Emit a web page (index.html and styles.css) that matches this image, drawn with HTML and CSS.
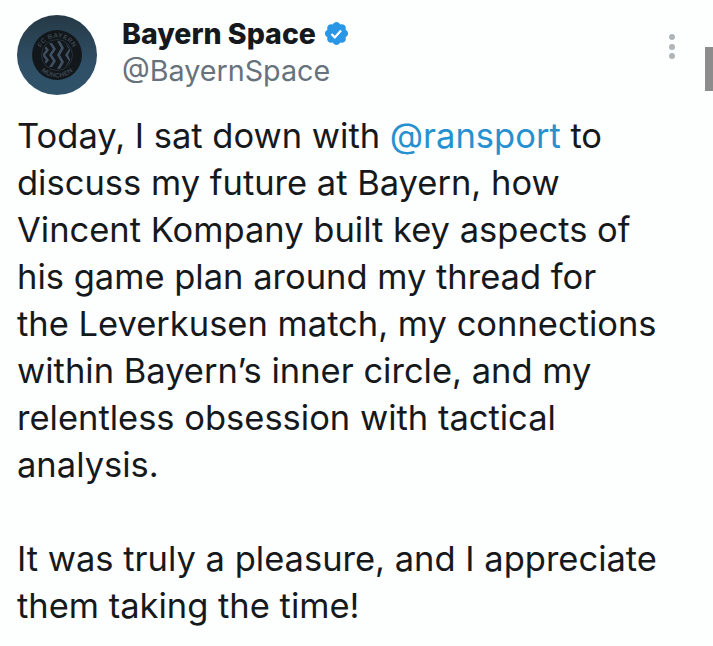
FILE: index.html
```html
<!DOCTYPE html>
<html lang="en">
<head>
<meta charset="utf-8">
<title>Bayern Space</title>
<link rel="stylesheet" href="styles.css">
</head>
<body>
<main class="tweet">
  <header class="head">
    <div class="avatar">
      <svg class="crest" viewBox="0 0 50 50" width="50" height="50" aria-hidden="true">
        <defs>
          <path id="ringTop" d="M7.500 25a17.500 17.500 0 0 1 35 0"/>
          <path id="ringBottom" d="M2.500 25a22.500 22.500 0 0 0 45 0"/>
          <clipPath id="inner"><circle cx="25" cy="25" r="14"/></clipPath>
        </defs>
        <circle cx="25" cy="25" r="25" fill="#12171b"/>
        <circle cx="25" cy="25" r="15.500" fill="none" stroke="#303a42" stroke-width=".7"/>
        <text class="crest-text"><textPath href="#ringTop" startOffset="50%" text-anchor="middle">FC BAYERN</textPath></text>
        <text class="crest-text"><textPath href="#ringBottom" startOffset="50%" text-anchor="middle">MÜNCHEN</textPath></text>
        <g clip-path="url(#inner)" fill="#3f5062">
          <path d="M10 15l4 5-4 5 4 5-4 5h3l4-5-4-5 4-5-4-5zM17 13l4 6-4 6 4 6-4 6h3l4-6-4-6 4-6-4-6zM25 11l4 7-4 7 4 7-4 7h3l4-7-4-7 4-7-4-7zM33 13l4 6-4 6 4 6-4 6h3l3-6-3-6 3-6-3-6z"/>
        </g>
      </svg>
    </div>
    <div class="names">
      <div class="name-row">
        <span class="name">Bayern Space</span>
        <svg class="badge" viewBox="0 0 24 24" width="27" height="27" aria-hidden="true">
          <path fill="#2a96e6" d="M22.250 12c0-1.430-.880-2.670-2.190-3.340.460-1.390.200-2.900-.810-3.910s-2.520-1.270-3.910-.810c-.660-1.310-1.910-2.190-3.340-2.190s-2.670.880-3.330 2.190c-1.400-.460-2.910-.200-3.920.810s-1.260 2.520-.800 3.910c-1.310.670-2.200 1.910-2.200 3.340s.890 2.670 2.200 3.340c-.460 1.390-.210 2.900.800 3.910s2.520 1.260 3.910.810c.670 1.310 1.910 2.190 3.340 2.190s2.680-.880 3.340-2.190c1.390.450 2.900.200 3.910-.810s1.270-2.520.810-3.910c1.310-.670 2.190-1.910 2.190-3.340z"/>
          <path fill="#fff" d="M10.540 16.840l-3.740-3.740 1.410-1.410 2.260 2.270 4.840-5.280 1.470 1.350z"/>
        </svg>
      </div>
      <div class="handle">@BayernSpace</div>
    </div>
    <div class="dots" aria-hidden="true"><i></i><i></i><i></i></div>
    <div class="scrollbar" aria-hidden="true"></div>
  </header>
  <p class="body">Today, I sat down with <a class="mention">@ransport</a> to<br>discuss my future at Bayern, how<br>Vincent Kompany built key aspects of<br>his game plan around my thread for<br>the Leverkusen match, my connections<br>within Bayern’s inner circle, and my<br>relentless obsession with tactical<br>analysis.<br><br>It was truly a pleasure, and I appreciate<br>them taking the time!</p>
</main>
</body>
</html>
```
FILE: styles.css
```css
* { box-sizing: border-box; }
html, body { margin: 0; padding: 0; }
body {
  width: 713px;
  height: 646px;
  overflow: hidden;
  background: #fdfefe;
  color: #16191c;
  font-family: "Inter", sans-serif;
}
.tweet { padding: 15px 0 0 17px; }
.head { display: flex; align-items: flex-start; }
.avatar {
  width: 80px;
  height: 80px;
  flex: none;
  border-radius: 50%;
  background: linear-gradient(#263946 0, #2f4f66 60%, #2f5268 100%);
  display: flex;
  align-items: center;
  justify-content: center;
}
.crest-text { font: 700 6.500px "Liberation Sans", sans-serif; fill: #3a454e; letter-spacing: .3px; }
.names { margin-left: 25px; }
.name-row { display: flex; align-items: center; gap: 7px; height: 38px; }
.name { font: 800 28.500px/38px "Inter", sans-serif; color: #15181c; }
.badge { flex: none; margin-top: -2px; }
.handle { font: 400 28.700px/36px "Inter", sans-serif; color: #66727c; }
.dots {
  margin-left: auto;
  margin-top: 19px;
  width: 7px;
  display: flex;
  flex-direction: column;
  gap: 3.500px;
}
.dots i { display: block; width: 6px; height: 6px; border-radius: 50%; background: #b0b5b8; }
.scrollbar { width: 8px; height: 44px; margin: 32px 0 0 29px; background: #8c8c8c; }
.body {
  margin: 17px 0 0;
  font-size: 34.500px;
  line-height: 47px;
  white-space: nowrap;
}
.mention { color: #2790cf; }
```
